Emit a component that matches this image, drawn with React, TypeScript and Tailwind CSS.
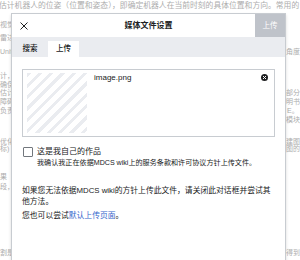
import React from "react";

// faded article text behind the dialog: [left fragment, right fragment, row height]
const bgRows: [string, string, string][] = [
  ["视觉里程计", "", "h-[13px]"],
  ["雷达建图", "", "h-[14px]"],
  ["Unity", "和角度", "h-[24px]"],
  ["计，以便", "", "h-[9px]"],
  ["确保系统", "", "h-[8px]"],
  ["估计过程", "的一部分", "h-[9px]"],
  ["障碍物", "说明书", "h-[9px]"],
  ["负责定位", "E。", "h-[9px]"],
  ["", "前端模块", "h-[22px]"],
  ["优化的结果", "了建图", "h-[7px]"],
  ["标)", "图的", "h-[28px]"],
  ["果", "", "h-[10px]"],
  ["段，", "", "h-[66px]"],
  ["割是", "得到", "h-[10px]"],
];

const Background = () => (
  <div className="text-[7px] leading-[8px] text-[#adadad]">
    <div className="h-[12px] pt-[2px] -ml-[1px] whitespace-nowrap text-[7.8px]">
      估计机器人的位姿（位置和姿态），即确定机器人在当前时刻的具体位置和方向。常用的
    </div>
    <div className="pt-[9px]">
      {bgRows.map(([left, right, h], i) => (
        <div key={i} className={`${h} flex whitespace-nowrap`}>
          <div className="w-[287px]">{left}</div>
          <div>{right}</div>
        </div>
      ))}
    </div>
  </div>
);

const CloseIcon = () => (
  <svg width="8" height="8" viewBox="0 0 8 8">
    <path d="M0.5 0.5L7.5 7.5M7.5 0.5L0.5 7.5" stroke="#202122" strokeWidth="1" />
  </svg>
);

const RemoveIcon = () => (
  <svg width="7" height="7" viewBox="0 0 7 7">
    <circle cx="3.5" cy="3.5" r="3.5" fill="#202122" />
    <path d="M2 2L5 5M5 2L2 5" stroke="white" strokeWidth="1" />
  </svg>
);

const Dialog = () => (
  <div className="absolute left-[11px] top-[13px] w-[275px] h-[260px] bg-white border border-[#c8ccd1] shadow-[0_2px_3px_rgba(0,0,0,0.15)] flex flex-col text-[#202122]">
    <div className="h-[23px] flex items-stretch">
      <button className="w-[30px] pl-[8px] flex items-center">
        <CloseIcon />
      </button>
      <div className="flex-1 flex items-center justify-center text-[8px] font-bold">
        媒体文件设置
      </div>
      <button className="w-[30px] bg-[#bfc3ca] text-white text-[7.5px]">上传</button>
    </div>
    <div className="h-[20px] bg-[#eaecf0] flex items-end gap-[4px] pl-[4px] text-[7.5px] font-medium">
      <div className="w-[28px] h-[16px] flex items-center justify-center">搜索</div>
      <div className="w-[31px] h-[16px] bg-white flex items-center justify-center">上传</div>
    </div>
    <div className="px-[10px] pt-[12px]">
      <div className="h-[68px] border border-[#c8ccd1] px-[4px] py-[3px] flex">
        <div className="w-[60px] h-[60px] bg-[repeating-linear-gradient(135deg,#eaecf0_0px,#eaecf0_3px,#ffffff_3px,#ffffff_8px)]" />
        <div className="ml-[7px] text-[8px] leading-[10px]">image.png</div>
        <div className="ml-auto mr-[2px] mt-[1px]">
          <RemoveIcon />
        </div>
      </div>
      <div className="mt-[10px] flex items-center gap-[4px] pl-[1px]">
        <div className="w-[10px] h-[10px] border border-[#72777d] rounded-[1px] bg-white" />
        <div className="text-[8px] leading-[10px]">这是我自己的作品</div>
      </div>
      <div className="pl-[15px] text-[7.1px] leading-[12px]">
        我确认我正在依据MDCS wiki上的服务条款和许可协议方针上传文件。
      </div>
      <p className="mt-[16px] text-[7.8px] leading-[11px]">
        如果您无法依据MDCS wiki的方针上传此文件，请关闭此对话框并尝试其他方法。
      </p>
      <p className="mt-[3px] text-[7.8px] leading-[11px]">
        您也可以尝试<span className="text-[#3366cc]">默认上传页面</span>。
      </p>
    </div>
  </div>
);

export default function App() {
  return (
    <div className="relative w-[300px] h-[260px] overflow-hidden bg-white font-['Liberation_Sans','Noto_Sans_CJK_SC',sans-serif]">
      <Background />
      <Dialog />
    </div>
  );
}
